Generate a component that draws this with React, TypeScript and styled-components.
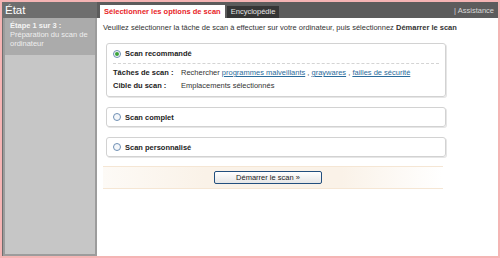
import React from 'react'
import styled, { createGlobalStyle } from 'styled-components'

const GlobalStyle = createGlobalStyle`
	html, body {
		margin: 0;
		padding: 0;
		background: #ffffff;
	}
	* {
		box-sizing: border-box;
	}
`

const Frame = styled.div`
	width: 500px;
	height: 258px;
	border: 2px solid #f5b4b4;
	display: flex;
	font-family: 'Liberation Sans', Arial, sans-serif;
	font-size: 7.5px;
	color: #333;
	background: #fff;
`

const Sidebar = styled.div`
	width: 95px;
	display: flex;
	flex-direction: column;
	background: #6e6e6e;
`

const SidebarTitle = styled.div`
	height: 16px;
	padding: 1px 0 0 3px;
	color: #fff;
	font-size: 11.5px;
	line-height: 14px;
`

const SidebarPanel = styled.div`
	flex: 1;
	margin: 0 0 0 1px;
	border: 2px solid #9c9c9c;
	border-top: none;
	background: #c6c6c6;
	display: flex;
	flex-direction: column;
`

const StepBox = styled.div`
	background: #ababab;
	padding: 3px 4px 7px 5px;
	color: #eeeeee;
	line-height: 9px;
`

const StepTitle = styled.div`
	font-weight: bold;
	color: #f4f4f4;
`

const Main = styled.div`
	flex: 1;
	display: flex;
	flex-direction: column;
`

const TopBar = styled.div`
	height: 16px;
	background: #5c5c5c;
	display: flex;
	align-items: flex-end;
	padding-left: 3px;
	gap: 2px;
`

const Tab = styled.div<{ $active?: boolean }>`
	height: ${(p) => (p.$active ? 13 : 12)}px;
	padding: 0 4px;
	line-height: ${(p) => (p.$active ? 13 : 12)}px;
	background: ${(p) => (p.$active ? '#ffffff' : '#363636')};
	color: ${(p) => (p.$active ? '#e8231f' : '#e6e6e6')};
	font-weight: ${(p) => (p.$active ? 'bold' : 'normal')};
`

const Assistance = styled.div`
	margin-left: auto;
	align-self: center;
	color: #d8d8d8;
	padding-right: 4px;
`

const Content = styled.div`
	flex: 1;
	padding: 5px 0 0 6px;
	display: flex;
	flex-direction: column;
`

const Intro = styled.div`
	line-height: 10px;
	color: #333;
	margin-bottom: 10px;
`

const Cards = styled.div`
	display: flex;
	flex-direction: column;
	gap: 10px;
	width: 340px;
	margin-left: 3px;
`

const Card = styled.div`
	border: 1px solid #d2d2d2;
	border-radius: 3px;
	box-shadow: 1px 1px 0 #e6e6e6;
	padding: 0 6px;
`

const CardHeader = styled.div<{ $divided?: boolean }>`
	display: flex;
	align-items: center;
	gap: 4px;
	height: ${(p) => (p.$divided ? 20 : 18)}px;
	font-weight: bold;
	color: #222;
	border-bottom: ${(p) => (p.$divided ? '1px dashed #d4d4d4' : 'none')};
`

const Radio = styled.span<{ $checked?: boolean }>`
	width: 8px;
	height: 8px;
	border-radius: 50%;
	border: 1px solid #6e8fb4;
	background: #f4f7fa;
	display: inline-flex;
	align-items: center;
	justify-content: center;
	&::after {
		content: '';
		width: 4px;
		height: 4px;
		border-radius: 50%;
		background: ${(p) => (p.$checked ? '#3aa33a' : 'transparent')};
	}
`

const DetailRows = styled.div`
	padding: 4px 0 5px 0;
	display: flex;
	flex-direction: column;
	gap: 3px;
`

const DetailRow = styled.div`
	display: flex;
	line-height: 10px;
`

const DetailLabel = styled.span`
	width: 68px;
	font-weight: bold;
	color: #222;
`

const DetailLink = styled.a`
	color: #2b6c9c;
	text-decoration: underline;
`

const ButtonBar = styled.div`
	margin-top: 9px;
	width: 340px;
	height: 23px;
	background: linear-gradient(to right, #fdfaf6 0%, #faf2e8 30%, #faf2e8 70%, #ffffff 100%);
	border-top: 1px solid #f5e6d4;
	border-bottom: 1px solid #f5e6d4;
	display: flex;
	align-items: center;
	justify-content: center;
	padding-right: 10px;
`

const StartButton = styled.button`
	width: 108px;
	height: 13px;
	padding: 0;
	font-family: 'Liberation Sans', Arial, sans-serif;
	font-size: 7.5px;
	color: #222;
	border: 1px solid #224f7e;
	border-radius: 2px;
	background: linear-gradient(#ffffff, #e6e6e6);
`

export default function App() {
	return (
		<>
			<GlobalStyle />
			<Frame>
				<Sidebar>
					<SidebarTitle>État</SidebarTitle>
					<SidebarPanel>
						<StepBox>
							<StepTitle>Étape 1 sur 3 :</StepTitle>
							Préparation du scan de ordinateur
						</StepBox>
					</SidebarPanel>
				</Sidebar>
				<Main>
					<TopBar>
						<Tab $active>Sélectionner les options de scan</Tab>
						<Tab>Encyclopédie</Tab>
						<Assistance>| Assistance</Assistance>
					</TopBar>
					<Content>
						<Intro>
							Veuillez sélectionner la tâche de scan à effectuer sur votre ordinateur, puis sélectionnez{' '}
							<b>Démarrer le scan</b>
						</Intro>
						<Cards>
							<Card>
								<CardHeader $divided>
									<Radio $checked />
									Scan recommandé
								</CardHeader>
								<DetailRows>
									<DetailRow>
										<DetailLabel>Tâches de scan :</DetailLabel>
										<span>
											Rechercher <DetailLink>programmes malveillants</DetailLink> ,{' '}
											<DetailLink>graywares</DetailLink> , <DetailLink>failles de sécurité</DetailLink>
										</span>
									</DetailRow>
									<DetailRow>
										<DetailLabel>Cible du scan :</DetailLabel>
										<span>Emplacements sélectionnés</span>
									</DetailRow>
								</DetailRows>
							</Card>
							<Card>
								<CardHeader>
									<Radio />
									Scan complet
								</CardHeader>
							</Card>
							<Card>
								<CardHeader>
									<Radio />
									Scan personnalisé
								</CardHeader>
							</Card>
						</Cards>
						<ButtonBar>
							<StartButton>Démarrer le scan »</StartButton>
						</ButtonBar>
					</Content>
				</Main>
			</Frame>
		</>
	)
}
